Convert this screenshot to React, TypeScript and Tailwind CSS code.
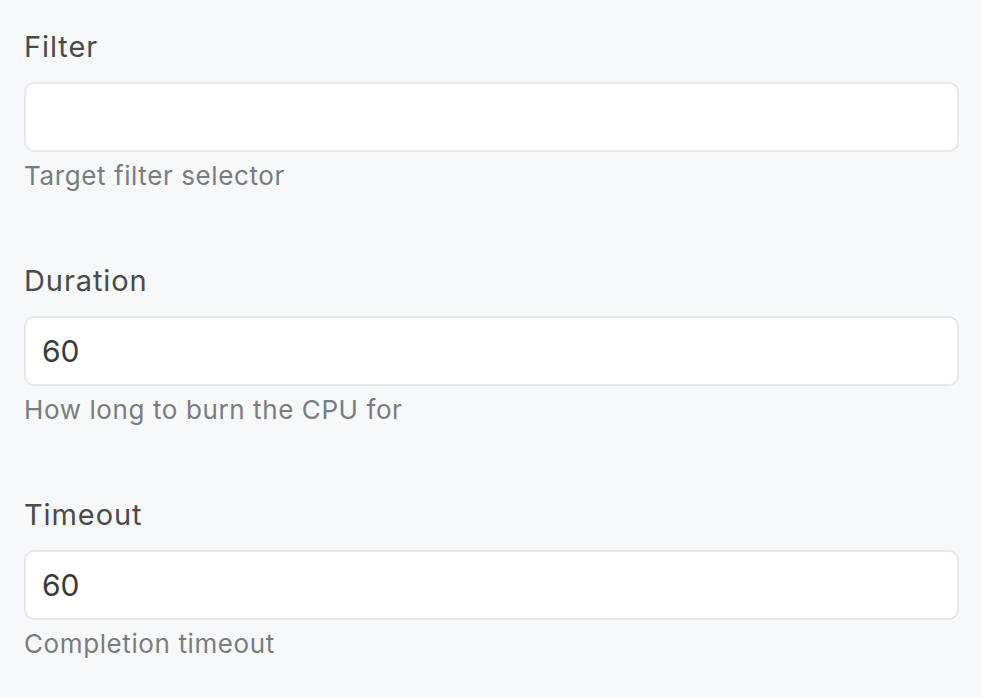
const fields = [
  { label: "Filter", value: "", help: "Target filter selector" },
  { label: "Duration", value: "60", help: "How long to burn the CPU for" },
  { label: "Timeout", value: "60", help: "Completion timeout" },
];

export default function App() {
  return (
    <div
      className="min-h-[698px] w-full bg-[#f7f8fa] px-6 pt-[29px]"
      style={{ fontFamily: "Inter, 'Liberation Sans', sans-serif" }}
    >
      <div className="flex w-[935px] flex-col gap-[69px]">
        {fields.map((f) => (
          <div key={f.label} className="flex flex-col">
            <label className="mb-[17px] text-[29px] leading-[36px] tracking-[0.9px] text-[#4a4a4a]">{f.label}</label>
            <input
              readOnly
              value={f.value}
              className="h-[70px] w-full rounded-[10px] border-2 border-[#e6e8eb] bg-white px-4 text-[30px] text-[#3a3a3a] outline-none"
            />
            <p className="mt-[6px] text-[26px] leading-[36px] tracking-[0.6px] text-[#7b7c80]">{f.help}</p>
          </div>
        ))}
      </div>
    </div>
  );
}
